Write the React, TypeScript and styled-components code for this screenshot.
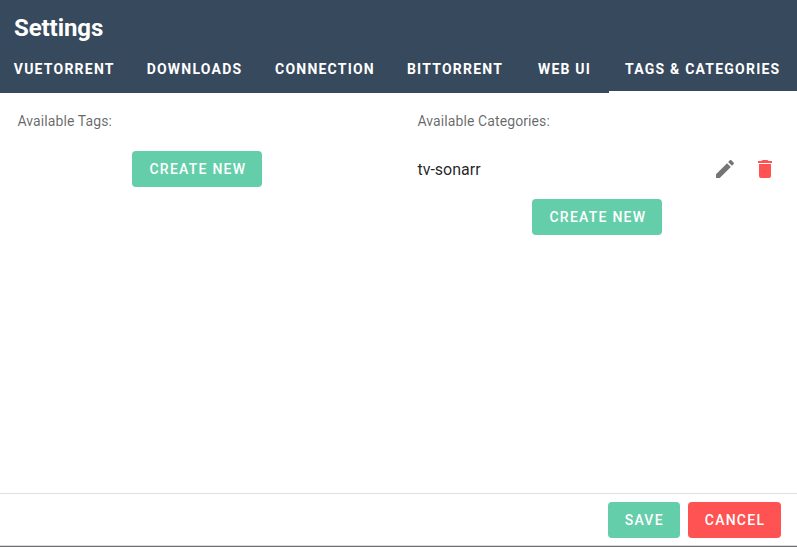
import React from 'react';
import styled, { createGlobalStyle } from 'styled-components';

const GlobalStyle = createGlobalStyle`
  *, *::before, *::after { box-sizing: border-box; }
  body { margin: 0; overflow: hidden; background: #fff; font-family: Roboto, sans-serif; }
`;

const Dialog = styled.div`
  display: flex;
  flex-direction: column;
  width: 797px;
  height: 547px;
  background: #fff;
  border-bottom: 1px solid #706f71;
  box-shadow: inset 0 -1px 0 #d8d8d8;
`;

const Header = styled.header`
  height: 93px;
  background: #37495d;
  color: #fff;
`;

const Title = styled.h1`
  margin: 0;
  padding: 12px 14px 0;
  height: 45px;
  font-size: 24px;
  line-height: 32px;
  font-weight: 700;
  letter-spacing: -0.08px;
`;

const TabBar = styled.nav`
  display: flex;
  height: 48px;
`;

const Tab = styled.button<{ $width: number; $active?: boolean }>`
  flex: none;
  width: ${(p) => p.$width}px;
  height: 48px;
  padding: 2px 0 0;
  border: 0;
  border-bottom: 2px solid ${(p) => (p.$active ? '#fff' : 'transparent')};
  background: none;
  color: #fff;
  font: 700 14px/44px Roboto, sans-serif;
  letter-spacing: 1.22px;
  text-transform: uppercase;
  white-space: nowrap;
`;

const Content = styled.main`
  flex: 1;
  display: grid;
  grid-template-columns: 400px 1fr;
`;

const Column = styled.section`
  display: flex;
  flex-direction: column;
  padding: 18px 20px 0 17.4px;
`;

const Label = styled.div`
  height: 34px;
  font-size: 14px;
  line-height: 20px;
  letter-spacing: 0.1px;
  color: rgba(0, 0, 0, 0.6);
`;

const Row = styled.div`
  display: flex;
  align-items: center;
  width: 359.6px;
  height: 48px;
  gap: 16px;
  font-size: 16px;
  color: rgba(0, 0, 0, 0.87);
`;

const RowName = styled.span`
  flex: 1;
`;

const IconButton = styled.button<{ $color: string }>`
  display: flex;
  padding: 0;
  border: 0;
  background: none;
  color: ${(p) => p.$color};
`;

const Icon = styled.svg`
  width: 24px;
  height: 24px;
  fill: currentColor;
`;

const Button = styled.button<{ $width: number; $danger?: boolean }>`
  width: ${(p) => p.$width}px;
  height: 36px;
  padding: 0 0 0 1px;
  border: 0;
  border-radius: 4px;
  background: ${(p) => (p.$danger ? '#ff5252' : '#64ceaa')};
  color: #fff;
  font: 500 14px/36px Roboto, sans-serif;
  letter-spacing: 1.25px;
  text-transform: uppercase;
`;

const Centered = styled.div`
  display: flex;
  justify-content: center;
  width: 360px;
  padding-top: 6px;
`;

const Footer = styled.footer`
  display: flex;
  justify-content: flex-end;
  gap: 8px;
  height: 53px;
  padding: 8px 16px;
  border-top: 1px solid #e0e0e0;
`;

const tabs = [
  { name: 'VueTorrent', width: 128.5 },
  { name: 'Downloads', width: 132 },
  { name: 'Connection', width: 129 },
  { name: 'BitTorrent', width: 131 },
  { name: 'Web UI', width: 88 },
  { name: 'Tags & Categories', width: 188.5 },
];

export default function App() {
  return (
    <>
      <GlobalStyle />
      <Dialog>
        <Header>
          <Title>Settings</Title>
          <TabBar>
            {tabs.map((t) => (
              <Tab key={t.name} $width={t.width} $active={t.name === 'Tags & Categories'}>
                {t.name}
              </Tab>
            ))}
          </TabBar>
        </Header>
        <Content>
          <Column>
            <Label>Available Tags:</Label>
            <Centered>
              <Button $width={130}>Create new</Button>
            </Centered>
          </Column>
          <Column>
            <Label>Available Categories:</Label>
            <Row>
              <RowName>tv-sonarr</RowName>
              <IconButton $color="#757575" aria-label="Edit">
                <Icon viewBox="0 0 24 24">
                  <path d="M20.71,7.04C21.1,6.65 21.1,6 20.71,5.63L18.37,3.29C18,2.9 17.35,2.9 16.96,3.29L15.12,5.12L18.87,8.87M3,17.25V21H6.75L17.81,9.93L14.06,6.18L3,17.25Z" />
                </Icon>
              </IconButton>
              <IconButton $color="#ff5252" aria-label="Delete">
                <Icon viewBox="0 0 24 24">
                  <path d="M19,4H15.5L14.5,3H9.5L8.5,4H5V6H19M6,19A2,2 0 0,0 8,21H16A2,2 0 0,0 18,19V7H6V19Z" />
                </Icon>
              </IconButton>
            </Row>
            <Centered>
              <Button $width={130}>Create new</Button>
            </Centered>
          </Column>
        </Content>
        <Footer>
          <Button $width={72.5}>Save</Button>
          <Button $width={93} $danger>Cancel</Button>
        </Footer>
      </Dialog>
    </>
  );
}
